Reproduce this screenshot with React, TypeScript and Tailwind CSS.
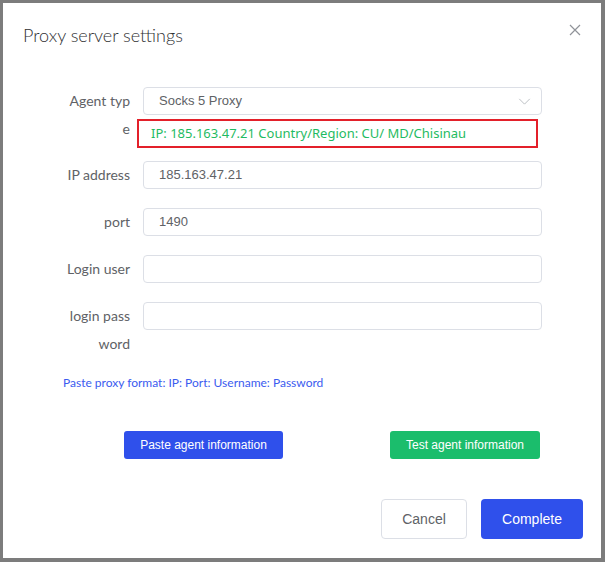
import React from "react";

const Field = ({ label, value }: { label: React.ReactNode; value?: string }) => (
  <div className="flex items-start">
    <div className="w-[70px] mr-[13px] text-right text-[14px] leading-[28px] text-[#606266] font-['Lato',sans-serif]">
      {label}
    </div>
    <div className="w-[399px] h-[28px] border border-[#dcdfe6] rounded-[4px] px-[15px] flex items-center text-[13px] text-[#606266] font-['Liberation_Sans',Arial,sans-serif]">
      {value}
    </div>
  </div>
);

export default function App() {
  return (
    <div className="min-h-screen bg-[#7c7c7c] p-[3px]">
      <div className="relative w-[598px] h-[555px] bg-white">
        <div className="pt-[20px] pl-[20px] text-[18px] leading-[24px] text-[#303133] font-light font-['Lato',sans-serif]">
          Proxy server settings
        </div>
        <button className="absolute right-[20px] top-[21px] w-[12px] h-[12px] text-[#909399]">
          <svg viewBox="0 0 12 12" width="12" height="12" fill="none" stroke="currentColor" strokeWidth="1.2">
            <path d="M1 1 L11 11 M11 1 L1 11" />
          </svg>
        </button>

        <div className="mt-[40px] pl-[57px] flex flex-col">
          <div className="flex items-start">
            <div className="w-[70px] mr-[13px] text-right text-[14px] leading-[28px] text-[#606266] font-['Lato',sans-serif]">
              Agent typ
              <br />e
            </div>
            <div className="flex flex-col">
              <div className="w-[399px] h-[28px] border border-[#dcdfe6] rounded-[4px] pl-[15px] pr-[10px] flex items-center justify-between text-[13px] text-[#606266] font-['Liberation_Sans',Arial,sans-serif]">
                <span>Socks 5 Proxy</span>
                <svg viewBox="0 0 14 8" width="13" height="7" fill="none" stroke="#b4b7bd" strokeWidth="1">
                  <path d="M1 1 L7 7 L13 1" />
                </svg>
              </div>
              <div className="ml-[-6px] mt-[4px] w-[401px] h-[29px] border-2 border-[#e3202a] pl-[12px] flex items-center text-[13px] text-[#1fbb62] font-['Noto_Sans',sans-serif]">
                IP: 185.163.47.21 Country/Region: CU/ MD/Chisinau
              </div>
            </div>
          </div>

          <div className="mt-[13px] flex flex-col gap-[19px]">
            <Field label="IP address" value="185.163.47.21" />
            <Field label="port" value="1490" />
            <Field label="Login user" />
            <Field
              label={
                <>
                  login pass
                  <br />
                  word
                </>
              }
            />
          </div>
        </div>

        <div className="mt-[17px] pl-[60px] text-[12px] leading-[16px] text-[#3b5bef] font-['Lato',sans-serif]">
          Paste proxy format: IP: Port: Username: Password
        </div>

        <div className="mt-[40px] flex font-['Liberation_Sans',Arial,sans-serif]">
          <button className="ml-[121px] w-[159px] h-[28px] rounded-[3px] bg-[#2f50eb] text-white text-[12px] font-medium">
            Paste agent information
          </button>
          <button className="ml-[107px] w-[150px] h-[28px] rounded-[3px] bg-[#1bbd6c] text-white text-[12px] font-medium">
            Test agent information
          </button>
        </div>

        <div className="mt-[40px] flex justify-end gap-[14px] pr-[18px] font-['Liberation_Sans',Arial,sans-serif]">
          <button className="w-[86px] h-[40px] rounded-[4px] border border-[#dcdfe6] bg-white text-[14px] text-[#606266]">
            Cancel
          </button>
          <button className="w-[102px] h-[40px] rounded-[4px] bg-[#2f50eb] text-[14px] text-white">
            Complete
          </button>
        </div>
      </div>
    </div>
  );
}
